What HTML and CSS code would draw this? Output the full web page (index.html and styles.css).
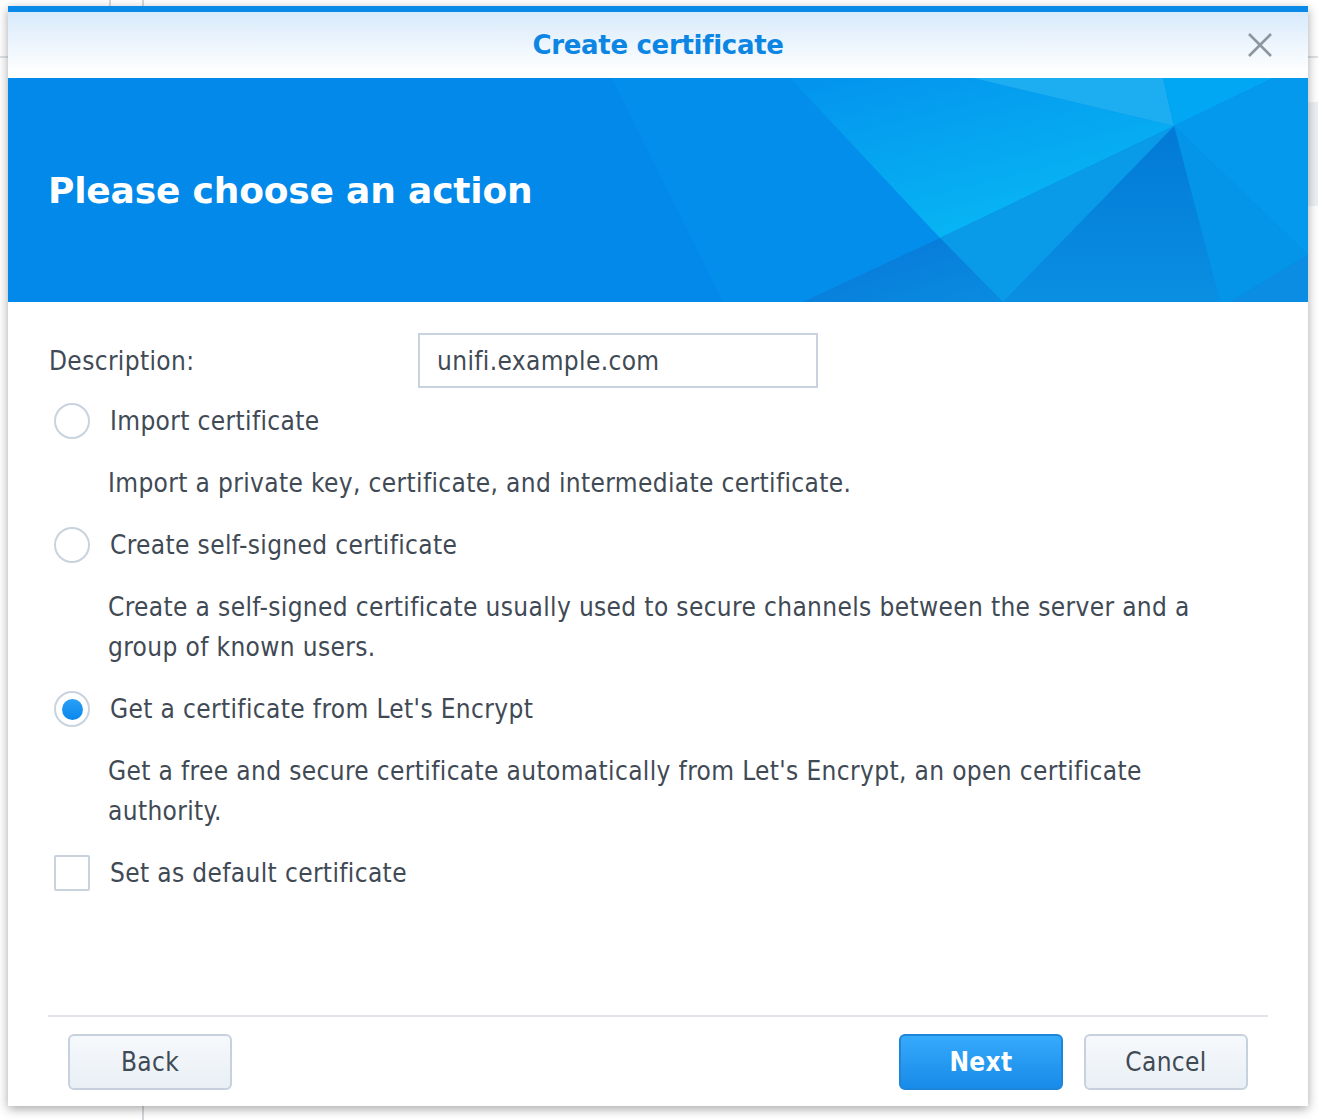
FILE: index.html
```html
<!DOCTYPE html>
<html lang="en">
<head>
<meta charset="utf-8">
<title>Create certificate</title>
<link rel="stylesheet" href="styles.css">
</head>
<body>
<div class="dialog">
  <div class="header">
    <div class="title">Create certificate</div>
    <button class="close" aria-label="Close">
      <svg width="26" height="24" viewBox="0 0 26 24"><path d="M2 1 L24 23 M24 1 L2 23" stroke="#8d959e" stroke-width="2.6" fill="none"/></svg>
    </button>
  </div>
  <div class="banner">
    <svg class="banner-art" width="1300" height="224" viewBox="0 0 1300 224" preserveAspectRatio="none">
      <defs>
        <linearGradient id="gBright" x1="0" y1="0" x2="0.6" y2="1">
          <stop offset="0" stop-color="#0393ee"/>
          <stop offset="1" stop-color="#08b8f3"/>
        </linearGradient>
        <linearGradient id="gDark" x1="0" y1="0" x2="0" y2="1">
          <stop offset="0" stop-color="#0279d6"/>
          <stop offset="1" stop-color="#0a8fe2"/>
        </linearGradient>
        <linearGradient id="gLow" x1="0" y1="0" x2="1" y2="1">
          <stop offset="0" stop-color="#0676d8"/>
          <stop offset="1" stop-color="#0a8ce0"/>
        </linearGradient>
      </defs>
      <rect width="1300" height="224" fill="#0389ea"/>
      <polygon points="604,0 782,0 932,160 795,224 715,224" fill="#048eec"/>
      <polygon points="782,0 965,0 1166,48 932,160" fill="url(#gBright)"/>
      <polygon points="965,0 1155,0 1166,48" fill="#1caef1"/>
      <polygon points="1155,0 1265,0 1166,48" fill="#02a7f4"/>
      <polygon points="1265,0 1300,0 1300,177 1166,48" fill="#0499ec"/>
      <polygon points="1166,48 1300,177 1222,224 1212,224" fill="#0494e8"/>
      <polygon points="1300,177 1300,224 1222,224" fill="#0a8de2"/>
      <polygon points="1166,48 1212,224 995,224" fill="url(#gDark)"/>
      <polygon points="932,160 1166,48 995,224" fill="#099be8"/>
      <polygon points="932,160 995,224 795,224" fill="url(#gLow)"/>
    </svg>
    <h1 class="banner-title">Please choose an action</h1>
  </div>
  <div class="content">
    <div class="field-row">
      <span class="field-label">Description:</span>
      <div class="text-input"><span>unifi.example.com</span></div>
    </div>
    <div class="option"><span class="radio"></span><span>Import certificate</span></div>
    <p class="desc">Import a private key, certificate, and intermediate certificate.</p>
    <div class="option"><span class="radio"></span><span>Create self-signed certificate</span></div>
    <p class="desc">Create a self-signed certificate usually used to secure channels between the server and a group of known users.</p>
    <div class="option"><span class="radio checked"></span><span>Get a certificate from Let's Encrypt</span></div>
    <p class="desc">Get a free and secure certificate automatically from Let's Encrypt, an open certificate authority.</p>
    <div class="option"><span class="checkbox"></span><span>Set as default certificate</span></div>
  </div>
  <div class="footer">
    <button class="btn">Back</button>
    <div class="spacer"></div>
    <button class="btn primary">Next</button>
    <button class="btn">Cancel</button>
  </div>
</div>
</body>
</html>
```
FILE: styles.css
```css
* { box-sizing: border-box; }
html, body { margin: 0; padding: 0; }
body {
  width: 1318px;
  height: 1120px;
  overflow: hidden;
  font-family: "DejaVu Sans Condensed", "DejaVu Sans", sans-serif;
  font-stretch: condensed;
  background-color: #ffffff;
  background-image:
    linear-gradient(#d4d8dc, #d4d8dc),
    linear-gradient(#d4d8dc, #d4d8dc),
    linear-gradient(#dde2e7, #dde2e7),
    linear-gradient(#edf1f5, #edf1f5);
  background-size: 2px 20px, 2px 100%, 100% 2px, 12px 104px;
  background-position: 109px 0, 142px 0, 0 56px, 1308px 102px;
  background-repeat: no-repeat;
}
.dialog {
  margin: 6px 0 0 8px;
  width: 1300px;
  height: 1100px;
  background: #fff;
  display: flex;
  flex-direction: column;
  box-shadow: 0 3px 10px rgba(0, 0, 0, 0.35);
}
.header {
  position: relative;
  height: 72px;
  border-top: 6px solid #0a8ae8;
  background: linear-gradient(#d8eafb, #ffffff 92%);
  display: flex;
  align-items: center;
  justify-content: center;
}
.title {
  font-family: "DejaVu Sans", sans-serif;
  font-stretch: normal;
  font-weight: bold;
  font-size: 26px;
  color: #0c86e2;
  letter-spacing: -0.3px;
}
.close {
  position: absolute;
  right: 35px;
  top: 21px;
  width: 26px;
  height: 24px;
  padding: 0;
  border: 0;
  background: none;
  display: flex;
}
.banner {
  position: relative;
  height: 224px;
  overflow: hidden;
  background: #0389ea;
  display: flex;
  align-items: center;
  padding-left: 40px;
}
.banner-art {
  position: absolute;
  left: 0;
  top: 0;
}
.banner-title {
  position: relative;
  margin: 0;
  color: #ffffff;
  font-family: "DejaVu Sans", sans-serif;
  font-stretch: normal;
  font-weight: bold;
  font-size: 36px;
  letter-spacing: -0.18px;
}
.content {
  flex: 1;
  padding: 31px 80px 0 40px;
  display: flex;
  flex-direction: column;
  gap: 22px;
  color: #3f4a55;
  font-size: 26px;
  letter-spacing: 0.36px;
}
.field-row {
  display: flex;
  align-items: center;
  height: 55px;
  margin-bottom: -9px;
}
.field-label {
  width: 370px;
  padding-left: 1px;
}
.text-input {
  width: 400px;
  height: 55px;
  border: 2px solid #c8d3df;
  padding-left: 17px;
  display: flex;
  align-items: center;
}
.option {
  display: flex;
  align-items: center;
  height: 40px;
  padding-left: 6px;
  gap: 20px;
}
.radio {
  width: 36px;
  height: 36px;
  border: 2px solid #c9d3de;
  border-radius: 50%;
  background: #fff;
  display: flex;
  align-items: center;
  justify-content: center;
  flex: none;
}
.radio.checked::after {
  content: "";
  width: 21px;
  height: 21px;
  border-radius: 50%;
  background: linear-gradient(#2a9ff6, #0a88ec);
}
.checkbox {
  width: 36px;
  height: 36px;
  border: 2px solid #c9d3de;
  border-radius: 2px;
  background: #fff;
  flex: none;
}
.desc {
  margin: 0;
  padding-left: 60px;
  line-height: 40px;
}
.footer {
  margin: 0 40px;
  height: 91px;
  border-top: 2px solid #e1e5e9;
  padding: 17px 20px 0;
  display: flex;
  gap: 21px;
}
.spacer { flex: 1; }
.btn {
  width: 164px;
  height: 56px;
  border: 2px solid #c6d1dd;
  border-radius: 6px;
  background: linear-gradient(#f6f9fc, #e9eff5);
  font-family: "DejaVu Sans Condensed", "DejaVu Sans", sans-serif;
  font-stretch: condensed;
  font-size: 26px;
  letter-spacing: 0.36px;
  color: #3f4a55;
  padding: 0;
}
.btn.primary {
  background: linear-gradient(#36aafb, #178be8);
  border-color: #1d86da;
  color: #ffffff;
  font-weight: bold;
}
```
